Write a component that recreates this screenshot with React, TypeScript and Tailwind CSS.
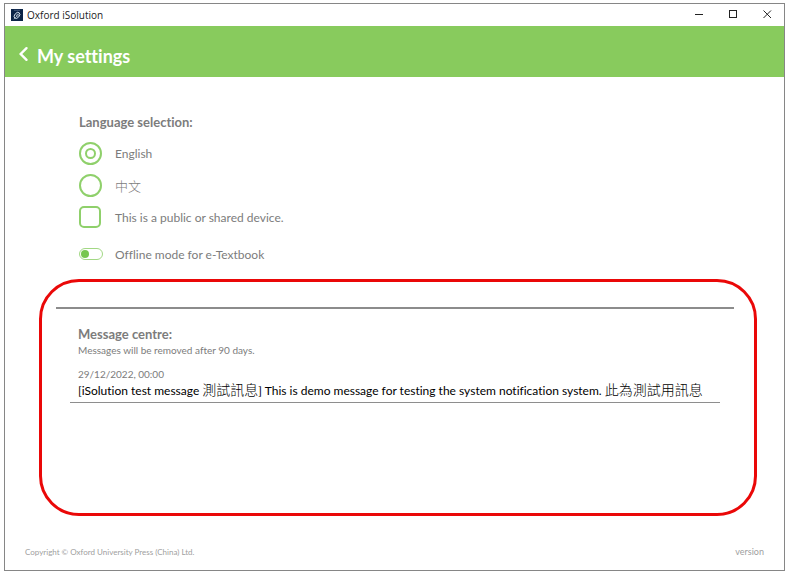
import { useState } from "react";

const FONT = "font-['Lato','Noto_Sans_CJK_TC',sans-serif] [font-variant-ligatures:none]";

function AppIcon() {
  return (
    <svg viewBox="0 0 12 12" className="size-3 shrink-0" aria-hidden="true">
      <rect width="12" height="12" fill="#0b2447" />
      <g fill="none" stroke="#dbe6f2">
        <ellipse cx="6" cy="6.4" rx="3.4" ry="2.3" transform="rotate(-50 6 6.4)" strokeWidth="0.9" />
        <path d="M5 7.6c1.500.1 2.500-1 2.300-2.400-1.200-.1-2 .8-1.800 1.800M2.800 10l1.800-1.600" strokeWidth="0.7" />
        <path d="M3 1.300h6" stroke="#6d83a3" strokeWidth="0.6" />
      </g>
    </svg>
  );
}

function TitleBar() {
  return (
    <div className="flex h-[22px] items-center justify-between pr-3 pl-1.5">
      <div className="flex items-center gap-1">
        <AppIcon />
        <span className="font-['Open_Sans',sans-serif] text-[10px] leading-4 text-[#222]">Oxford iSolution</span>
      </div>
      <div className="flex items-center gap-6 text-[#222]">
        <button type="button" aria-label="Minimize" className="block size-[10px]">
          <svg viewBox="0 0 10 10" className="size-[10px]" stroke="currentColor">
            <path d="M1 4.5h8" />
          </svg>
        </button>
        <button type="button" aria-label="Maximize" className="block size-[10px]">
          <svg viewBox="0 0 10 10" className="size-[10px]" stroke="currentColor" fill="none">
            <rect x="1.5" y="0.5" width="7" height="7" />
          </svg>
        </button>
        <button type="button" aria-label="Close" className="block size-[10px]">
          <svg viewBox="0 0 10 10" className="size-[10px]" stroke="currentColor">
            <path d="M1.500 0.500l7.500 7.500M9 0.500l-7.500 7.500" />
          </svg>
        </button>
      </div>
    </div>
  );
}

function Header() {
  return (
    <header className="flex h-[51px] items-center gap-2 bg-[#88cb5d] pt-2 pl-3.5 text-white">
      <button type="button" aria-label="Back" className="block">
        <svg viewBox="0 0 10 16" className="mb-1 h-4 w-2.5" fill="none" stroke="currentColor" strokeWidth="2.4" strokeLinecap="round">
          <path d="M7.500 2.200L1.700 8l5.800 5.800" />
        </svg>
      </button>
      <h1 className="text-[18px] leading-6 font-bold">My settings</h1>
    </header>
  );
}

type Language = "en" | "zh";

function LanguageForm() {
  const [language, setLanguage] = useState<Language>("en");
  const [shared, setShared] = useState(false);
  const [offline, setOffline] = useState(false);
  const options: { id: Language; label: string; size: string }[] = [
    { id: "en", label: "English", size: "text-[12px]" },
    { id: "zh", label: "中文", size: "text-[13px] font-light" },
  ];
  return (
    <form className="pt-[35px] pl-[74px] text-[12px] leading-5 text-[#7c7c7c]">
      <fieldset>
        <legend className="mb-[5px] text-[13px] leading-5 font-bold">Language selection:</legend>
        {options.map((option) => (
          <label key={option.id} className="flex h-8 w-fit items-center gap-[13px]">
            <input
              type="radio"
              name="language"
              checked={language === option.id}
              onChange={() => setLanguage(option.id)}
              className="grid size-[23px] shrink-0 appearance-none place-items-center rounded-full border-2 border-[#8fd06b] before:hidden before:size-[11px] before:rounded-full before:border-2 before:border-[#8fd06b] checked:before:block"
            />
            <span className={`pt-0.5 ${option.size}`}>{option.label}</span>
          </label>
        ))}
      </fieldset>
      <label className="flex h-8 w-fit items-center gap-3.5">
        <input
          type="checkbox"
          checked={shared}
          onChange={(event) => setShared(event.target.checked)}
          className="size-[22px] shrink-0 appearance-none rounded-[5px] border-2 border-[#8fd06b] checked:bg-[#84cb5c]"
        />
        <span className="pt-0.5">This is a public or shared device.</span>
      </label>
      <label className="mt-[3px] flex h-9 w-fit items-center gap-3">
        <input
          type="checkbox"
          role="switch"
          checked={offline}
          onChange={(event) => setOffline(event.target.checked)}
          className="flex h-3 w-6 shrink-0 appearance-none items-center rounded-full border border-[#a2d884] px-px before:size-2 before:rounded-full before:bg-[#76c64e] checked:justify-end"
        />
        <span className="pt-0.5">Offline mode for e-Textbook</span>
      </label>
    </form>
  );
}

function MessageCentre() {
  return (
    <section className="mt-[7px] mr-[27px] ml-[34px] min-h-[237px] rounded-[40px] border-3 border-[#ea0808] pt-[25px] pr-5 pl-3.5">
      <hr className="border-t-2 border-[#8c8c8c]" />
      <div className="px-3.5 pt-[15px]">
        <div className="pl-2">
          <h2 className="text-[13px] leading-5 font-bold text-[#7c7c7c]">Message centre:</h2>
          <p className="text-[10px] leading-3 text-[#7c7c7c]">Messages will be removed after 90 days.</p>
        </div>
        <article className="mt-3 border-b border-[#8e8e8e] pb-0.5 pl-2">
          <time className="block text-[10px] leading-3 text-[#7c7c7c]">29/12/2022, 00:00</time>
          <p className="pt-px text-[12px] leading-[18px] whitespace-nowrap text-black">
            [iSolution test message <span className="text-[14px] font-light">測試訊息</span>] This is demo message for testing the system
            notification system. <span className="text-[14px] font-light">此為測試用訊息</span>
          </p>
        </article>
      </div>
    </section>
  );
}

export default function App() {
  return (
    <div className={`min-h-screen bg-white pt-[3px] pr-[5px] pb-[3px] pl-1 ${FONT}`}>
      <div className="border border-[#868686]">
        <TitleBar />
        <Header />
        <main>
          <LanguageForm />
          <MessageCentre />
        </main>
        <footer className="flex justify-between pt-7 pr-5 pb-2.5 pl-5 leading-4 text-[#a0a0a0]">
          <span className="text-[8px]">Copyright © Oxford University Press (China) Ltd.</span>
          <span className="text-[9px]">version</span>
        </footer>
      </div>
    </div>
  );
}
